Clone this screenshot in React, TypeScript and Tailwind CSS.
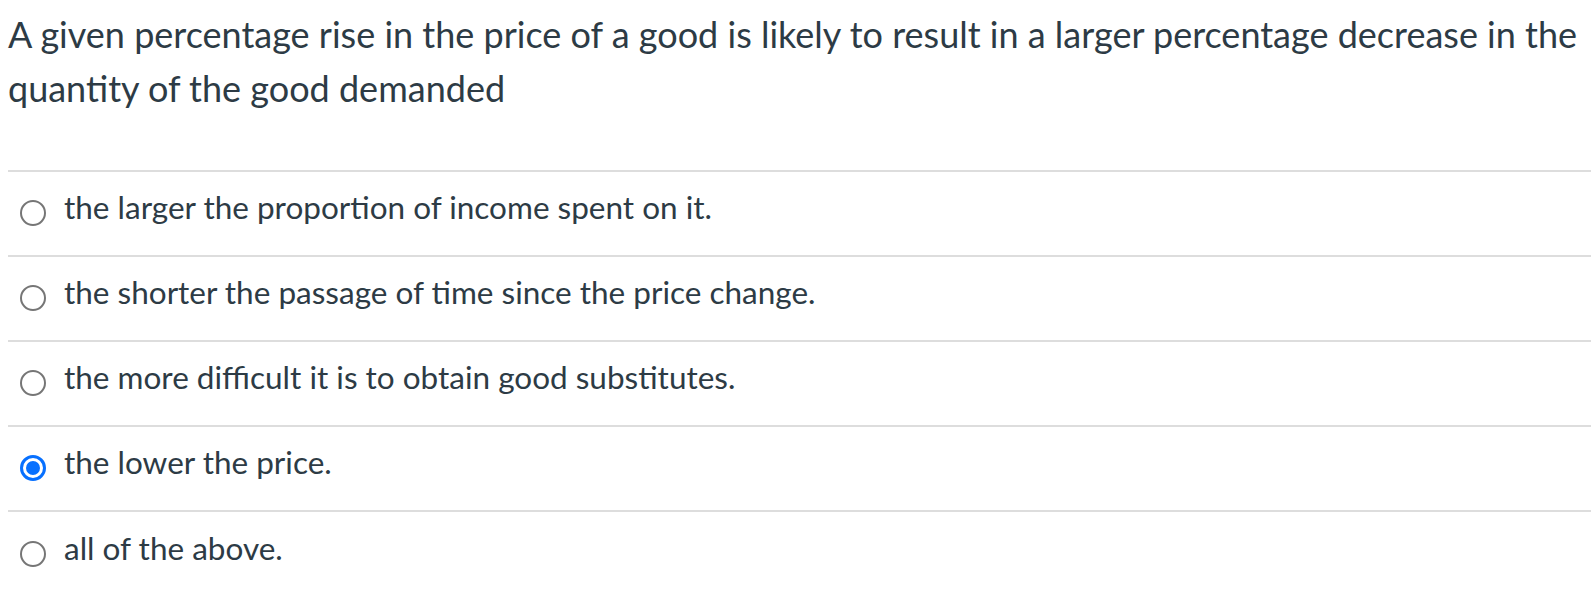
const options = [
  { label: "the larger the proportion of income spent on it.", checked: false },
  { label: "the shorter the passage of time since the price change.", checked: false },
  { label: "the more difficult it is to obtain good substitutes.", checked: false },
  { label: "the lower the price.", checked: true },
  { label: "all of the above.", checked: false },
];

function Radio({ checked }: { checked: boolean }) {
  if (checked) {
    return (
      <span className="flex h-[26px] w-[26px] shrink-0 items-center justify-center rounded-full border-[3px] border-[#0770ff] bg-white">
        <span className="h-[14px] w-[14px] rounded-full bg-[#0770ff]" />
      </span>
    );
  }
  return (
    <span className="h-[26px] w-[26px] shrink-0 rounded-full border-2 border-[#767676] bg-white" />
  );
}

export default function App() {
  return (
    <div className="h-[613px] w-[1596px] bg-white pl-2 font-['Lato',sans-serif] text-[#2d3b45]">
      {/* Question */}
      <p className="pt-[7px] text-[36px] leading-[54.3px]">
        A given percentage rise in the price of a good is likely to result in a larger percentage decrease in the
        quantity of the good demanded
      </p>

      {/* Answers */}
      <div className="mr-[5px] mt-[54px] border-t-2 border-[#dddddd]">
        {options.map((opt, idx) => (
          <label
            key={idx}
            className={
              "flex h-[85px] items-center gap-[18px] pl-3 " +
              (idx < options.length - 1 ? "border-b-2 border-[#dddddd]" : "")
            }
          >
            <Radio checked={opt.checked} />
            <span className="pb-[10px] text-[31.5px]">{opt.label}</span>
          </label>
        ))}
      </div>
    </div>
  );
}
